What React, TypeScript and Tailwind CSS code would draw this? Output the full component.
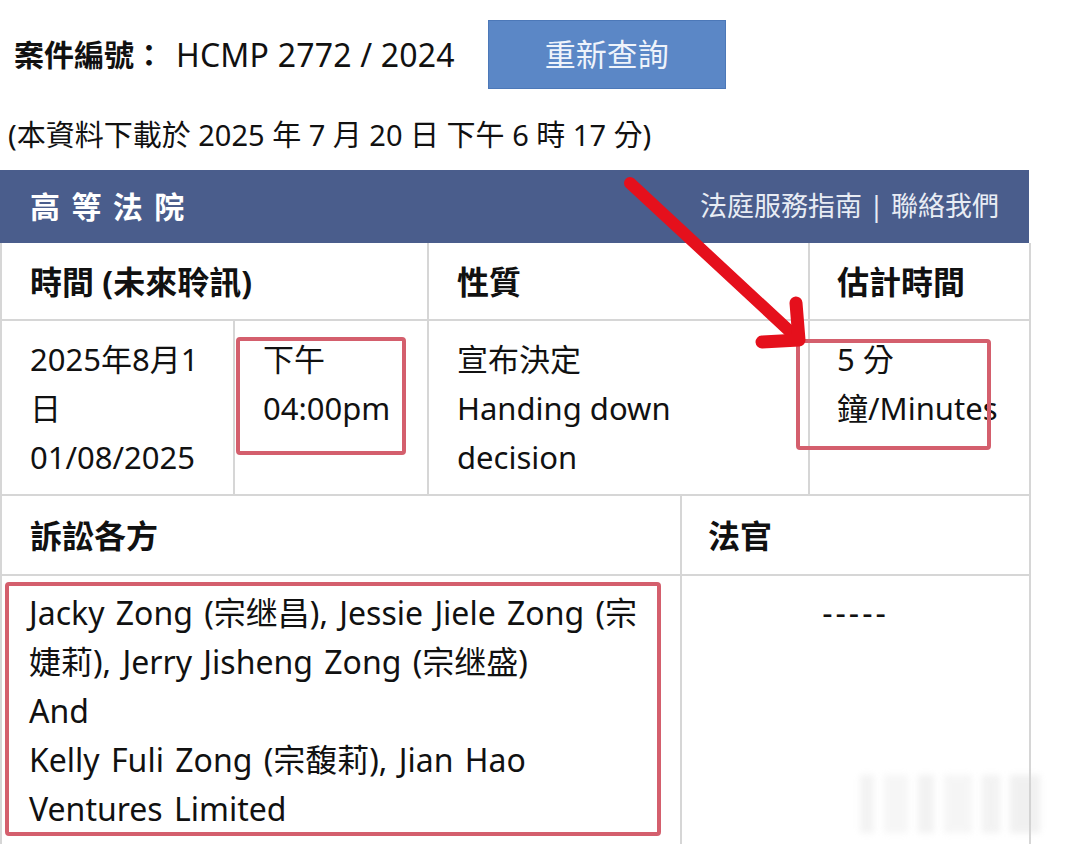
import React from "react";

// Court hearing lookup result (HK Judiciary style), with red markup drawn on top
const FONT = { fontFamily: '"Noto Sans", "Noto Sans CJK TC", sans-serif' };

const cell = "border-r-2 border-b-2 border-[#d6d6d6]";

function Arrow() {
  return (
    <svg className="pointer-events-none absolute left-0 top-0" width="1068" height="844">
      <g stroke="#e5101c" strokeLinecap="round" strokeLinejoin="round" fill="none">
        <line x1="630" y1="183" x2="797" y2="338" strokeWidth="12" />
        <polyline points="796,303 799,340 762,342" strokeWidth="13" />
      </g>
    </svg>
  );
}

export default function App() {
  return (
    <div className="relative h-[844px] w-[1068px] overflow-hidden bg-white text-[#111]" style={FONT}>
      {/* case number + re-query */}
      <div className="flex h-[89px] items-end pl-[14px]">
        <div className="flex h-[69px] items-center">
          <span className="text-[30px] font-bold">案件編號：</span>
          <span className="ml-[12px] text-[32px] tracking-[0.2px]">HCMP 2772 / 2024</span>
        </div>
        <button className="ml-[33px] h-[69px] w-[238px] border border-[#4c78b8] bg-[#5b87c6] text-[31px] text-[#eef3fb]">
          重新查詢
        </button>
      </div>

      <div className="mt-[28px] h-[53px] pl-[8px] text-[29px] leading-[36px]">
        (本資料下載於 2025 年 7 月 20 日 下午 6 時 17 分)
      </div>

      <div className="w-[1029px]">
        {/* court bar */}
        <div className="flex h-[73px] items-center justify-between bg-[#4a5d8c] pl-[30px] pr-[30px] text-white">
          <span className="text-[30px] font-bold tracking-[0.38em]">高等法院</span>
          <span className="text-[27px] text-[#e8ecf4]">法庭服務指南 | 聯絡我們</span>
        </div>

        {/* hearing table */}
        <div className="grid grid-cols-[233px_194px_381px_221px] border-l-2 border-[#d6d6d6] text-[31px] leading-[49px]">
          <div className={`${cell} col-span-2 flex h-[78px] items-center pl-[28px] text-[32px] font-bold`}>時間 (未來聆訊)</div>
          <div className={`${cell} flex items-center pl-[28px] text-[32px] font-bold`}>性質</div>
          <div className={`${cell} flex items-center pl-[27px] text-[32px] font-bold`}>估計時間</div>

          <div className={`${cell} h-[175px] pl-[28px] pt-[14px]`}>
            <div>2025年8月1</div>
            <div>日</div>
            <div>01/08/2025</div>
          </div>
          <div className={`${cell} pl-[28px] pt-[14px]`}>
            <div>下午</div>
            <div>04:00pm</div>
          </div>
          <div className={`${cell} pl-[28px] pt-[14px]`}>
            <div>宣布決定</div>
            <div>Handing down</div>
            <div>decision</div>
          </div>
          <div className={`${cell} pl-[27px] pt-[14px]`}>
            <div>5 分</div>
            <div className="whitespace-nowrap">鐘/Minutes</div>
          </div>
        </div>

        {/* parties table */}
        <div className="grid grid-cols-[680px_349px] border-l-2 border-[#d6d6d6] text-[32px] leading-[49px]">
          <div className={`${cell} flex h-[80px] items-center pl-[28px] font-bold`}>訴訟各方</div>
          <div className={`${cell} flex items-center pl-[26px] font-bold`}>法官</div>

          <div className="h-[268px] border-r-2 border-[#d6d6d6] pl-[27px] pr-[10px] pt-[12px] [word-spacing:3px]">
            <div className="whitespace-nowrap">Jacky Zong (宗继昌), Jessie Jiele Zong (宗</div>
            <div>婕莉), Jerry Jisheng Zong (宗继盛)</div>
            <div>And</div>
            <div>Kelly Fuli Zong (宗馥莉), Jian Hao</div>
            <div>Ventures Limited</div>
          </div>
          <div className="border-r-2 border-[#d6d6d6] pt-[12px] text-center tracking-[3px]">-----</div>
        </div>
      </div>

      {/* red markup boxes */}
      <div className="pointer-events-none absolute left-[236px] top-[337px] h-[118px] w-[170px] rounded-[4px] border-[4px] border-[#d45f6d]" />
      <div className="pointer-events-none absolute left-[796px] top-[339px] h-[111px] w-[195px] rounded-[4px] border-[4px] border-[#d45f6d]" />
      <div className="pointer-events-none absolute left-[5px] top-[582px] h-[254px] w-[656px] rounded-[4px] border-[4px] border-[#d45f6d]" />

      {/* faint watermark */}
      <div className="pointer-events-none absolute left-[860px] top-[775px] flex h-[58px] w-[180px] gap-[10px] opacity-30 blur-[3px]">
        <div className="w-[14px] bg-[#d8d8d8]" />
        <div className="w-[24px] bg-[#e2e2e2]" />
        <div className="w-[16px] bg-[#d4d4d4]" />
        <div className="w-[28px] bg-[#e0e0e0]" />
        <div className="w-[18px] bg-[#d6d6d6]" />
        <div className="w-[30px] bg-[#cfcfcf]" />
      </div>

      <Arrow />
    </div>
  );
}
